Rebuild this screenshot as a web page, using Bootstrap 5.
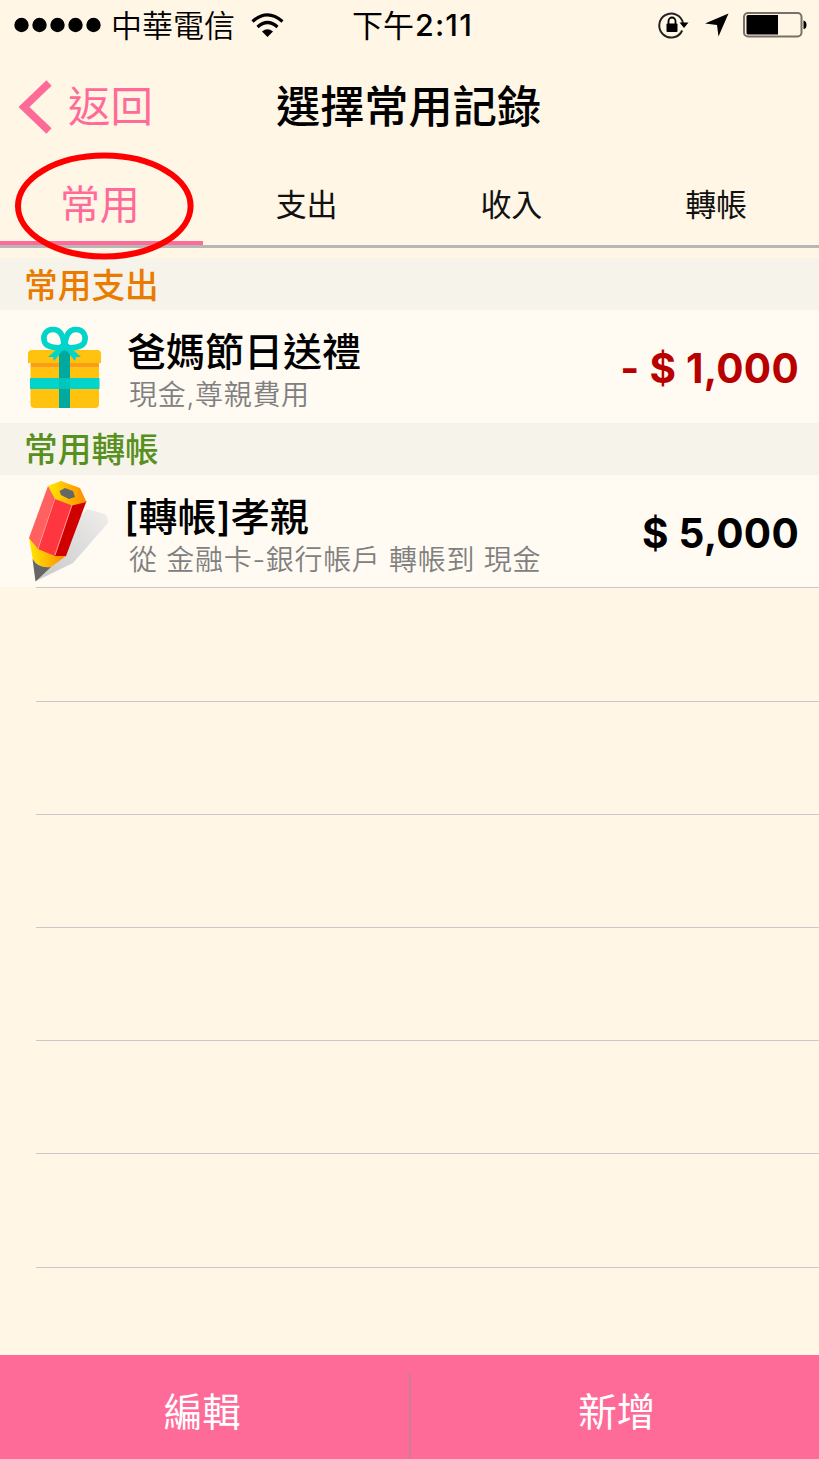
<!DOCTYPE html>
<html lang="zh-Hant">
<head>
<meta charset="utf-8">
<meta name="viewport" content="width=device-width, initial-scale=1">
<title>選擇常用記錄</title>
<link href="https://cdn.jsdelivr.net/npm/bootstrap@5.3.0/dist/css/bootstrap.min.css" rel="stylesheet">
<style>
  body { background: #fff6e6; color: #000; font-family: Inter, "Noto Sans CJK TC", sans-serif; line-height: 1; }
  .app { height: 1459px; }
  .status { height: 50px; padding: 0 13px 0 14px; font-size: 31px; }
  .status svg, .topbar svg, .entry svg { display: block; flex: none; }
  .side { flex: 1 1 0; }
  .carrier { font-weight: 350; margin-left: 9px; }
  .clock { font-size: 31px; margin-left: 4px; }
  .digits { font-size: 30.500px; font-weight: 500; letter-spacing: 1.200px; margin-left: 1px; }
  .indicators { margin-right: -1px; }
  .topbar { height: 112px; padding-top: 3px; }
  .back { color: #ff6b98; font-size: 42.500px; padding-left: 19px; text-decoration: none; gap: 16px; }
  .back svg { margin-top: -2px; }
  .screen-title { font-size: 44.200px; font-weight: 500; margin: 0 0 0 -21px; line-height: 1; }
  .tabs { height: 86px; border-bottom: 3px solid #b6b7b7; margin-bottom: 10px; }
  .tabs .nav-link { color: #111; font-size: 31px; padding: 2px 1px 0 0; line-height: 1; height: 83px; }
  .tabs .nav-link.active { color: #ff6b98; font-size: 40px; padding-right: 5px; }
  .tabs .marker { left: 0; bottom: 0; width: 203px; height: 4px; background: #ff6b98; }
  .ring { left: 14px; top: 152px; }
  .section-head { height: 52px; background: #f6f3ea; font-size: 33.700px; font-weight: 500; padding: 3px 0 0 24px; }
  .spend { color: #e97b00; }
  .transfer { color: #58901f; }
  .entry { height: 112.700px; background: #fffaf2; padding-right: 20px; }
  .icon-slot { width: 127px; height: 112px; }
  .entry-text { padding-top: 8px; }
  .entry-title { font-size: 39px; font-weight: 500; }
  .bracketed { margin-left: -3px; }
  .entry-note { font-size: 28px; letter-spacing: .7px; color: #808080; font-weight: 350; margin: 10px 0 0 2px; }
  .amount { font-size: 40.500px; font-weight: 650; letter-spacing: .25px; white-space: pre; padding-top: 6px; }
  .debit { color: #b80000; }
  .blank { height: 113.200px; margin-left: 36px; border-top: 1.500px solid #cbc9c7; }
  .actions { height: 104px; background: #ff6b98; }
  .actions .btn { border: 0; border-radius: 0; color: #fff; font-size: 38.500px; font-weight: 400; line-height: 1; padding: 10px 4px 0 0; }
  .actions .btn:last-child { padding: 10px 0 0 4px; }
  .split { width: 2px; height: 86px; background: #c97f97; }
</style>
</head>
<body>
<div class="app d-flex flex-column position-relative overflow-hidden">
  <div class="status d-flex align-items-center flex-shrink-0">
    <div class="side d-flex align-items-center">
      <svg width="88" height="16"><g><circle cx="7.5" cy="8" r="7.2"/><circle cx="25.5" cy="8" r="7.2"/><circle cx="43.5" cy="8" r="7.2"/><circle cx="61.5" cy="8" r="7.2"/><circle cx="79.5" cy="8" r="7.2"/></g></svg>
      <span class="carrier">中華電信</span>
      <svg class="ms-3" width="33" height="24" viewBox="0 0 32 24"><g fill="none" stroke="#000" stroke-width="3.2"><path d="M1 8.500Q16-4.700 31 8.500"/><path d="M6 14Q16 5 26 14"/></g><path d="M10.500 18.500Q16 14 21.500 18.500L16 24Z"/></svg>
    </div>
    <div class="clock d-flex align-items-center"><span>下午</span><span class="digits">2:11</span></div>
    <div class="side indicators d-flex align-items-center justify-content-end">
      <svg width="31" height="28" viewBox="0 0 31 28"><path d="M24.200 19.500A12 12 0 1 1 25 12" fill="none" stroke="#222" stroke-width="2"/><path d="M21.500 11.500H30.500L26 17Z"/><rect x="8.500" y="12.500" width="11" height="8.500" rx="1"/><path d="M10.500 13V10a3.500 3.500 0 0 1 7 0V13" fill="none" stroke="#000" stroke-width="1.800"/></svg>
      <svg style="margin-left:16px" width="24" height="24" viewBox="0 0 24 24"><path d="M23.500 0.500L13.500 23.500L12 12L0 10.500Z"/></svg>
      <svg style="margin-left:14px" width="64" height="26" viewBox="0 0 64 26"><rect x="1" y="1" width="57.500" height="23.500" rx="4" fill="none" stroke="#777167" stroke-width="2"/><path d="M5 3H35V22.500H5Q3.500 22.500 3.500 21V4.500Q3.500 3 5 3Z"/><path d="M60.500 8.500Q63.500 9 63.500 13T60.500 17Z"/></svg>
    </div>
  </div>

  <header class="topbar d-flex align-items-center flex-shrink-0">
    <a href="#" class="back side d-flex align-items-center">
      <svg width="33" height="54" viewBox="0 0 33 54"><path d="M30 3L5 27L30 51" fill="none" stroke="#ff6b98" stroke-width="7.500"/></svg>
      <span>返回</span>
    </a>
    <h1 class="screen-title">選擇常用記錄</h1>
    <div class="side"></div>
  </header>

  <nav class="tabs nav row g-0 position-relative flex-shrink-0">
    <a href="#" class="nav-link active col-3 d-flex align-items-center justify-content-center">常用</a>
    <a href="#" class="nav-link col-3 d-flex align-items-center justify-content-center">支出</a>
    <a href="#" class="nav-link col-3 d-flex align-items-center justify-content-center">收入</a>
    <a href="#" class="nav-link col-3 d-flex align-items-center justify-content-center">轉帳</a>
    <span class="marker position-absolute"></span>
  </nav>
  <svg class="ring position-absolute" width="180" height="108"><ellipse cx="90.300" cy="54" rx="86.300" ry="50.500" fill="none" stroke="#f00" stroke-width="6"/></svg>

  <main class="flex-grow-1 overflow-hidden">
    <div class="section-head spend d-flex align-items-center">常用支出</div>
    <div class="entry d-flex align-items-center">
      <svg class="icon-slot" viewBox="0 310 127 112">
        <rect x="30.500" y="360" width="68.500" height="48" rx="4" fill="#fec20f"/>
        <path d="M31 362H99V367H31Z" fill="#fc9c1c"/>
        <path d="M32 350H97Q101 350 101 354V363H28V354Q28 350 32 350Z" fill="#fec20f"/>
        <path d="M59 350H70V408H59Z" fill="#00a99d"/>
        <path d="M30 378H99.500V389H30Z" fill="#00d4cb"/>
        <path d="M59 378H70V389H59Z" fill="#00c5bb"/>
        <g fill="none" stroke="#00d4cb" stroke-width="5.500"><path d="M64 348C64 337 61 329.500 53 329.500C45 329.500 42 337 45 343C48 348 57 348 64 348"/><path d="M65 348C65 337 68 329.500 76 329.500C84 329.500 87 337 84 343C81 348 72 348 65 348"/></g>
        <path d="M60 344H69L72 349L81 357L76 357L75 361L66 350H63L54 361L53 357L48 357L57 349Z" fill="#00d4cb"/>
      </svg>
      <div class="entry-text flex-grow-1">
        <div class="entry-title">爸媽節日送禮</div>
        <div class="entry-note">現金,尊親費用</div>
      </div>
      <div class="amount debit">- $ 1,000</div>
    </div>
    <div class="section-head transfer d-flex align-items-center">常用轉帳</div>
    <div class="entry d-flex align-items-center">
      <svg class="icon-slot" viewBox="0 475 127 112">
        <defs>
          <linearGradient id="shade" x1="0" y1="1" x2="1" y2="0"><stop offset="0" stop-color="#c8c8c8"/><stop offset="1" stop-color="#efeeec"/></linearGradient>
          <linearGradient id="gold"><stop offset="0" stop-color="#ffe800"/><stop offset="1" stop-color="#ff8a00"/></linearGradient>
        </defs>
        <path d="M36 581L60 540L87 509L105 514Q108 517 108 523L73 563Z" fill="url(#shade)"/>
        <path d="M29 538L33 560Q41 569 51 567L66 556L58 542Z" fill="url(#gold)"/>
        <path d="M32.500 559Q39 569 51 567L35.500 581.500Z" fill="#666"/>
        <path d="M48 486L29 538L38 549L56 496Z" fill="#ff6060"/>
        <path d="M55 495L38 549L55 556L72 504Z" fill="#ff3540"/>
        <path d="M72 504L86.500 501L66 556L55 556Z" fill="#d00000"/>
        <path d="M55 498L38 549M72 505L55 555" stroke="#ff9898" stroke-width="1" fill="none"/>
        <path d="M48 486L61 481L80 488L86.500 502L72 505.500L55 499Z" fill="url(#gold)"/>
        <path d="M59.500 491L65 488L73 491L75 497L69 499L61 495Z" fill="#666"/>
      </svg>
      <div class="entry-text flex-grow-1">
        <div class="entry-title bracketed">[轉帳]孝親</div>
        <div class="entry-note">從 金融卡-銀行帳戶 轉帳到 現金</div>
      </div>
      <div class="amount">$ 5,000</div>
    </div>
    <div class="blank"></div>
    <div class="blank"></div>
    <div class="blank"></div>
    <div class="blank"></div>
    <div class="blank"></div>
    <div class="blank"></div>
    <div class="blank"></div>
  </main>

  <footer class="actions d-flex align-items-end flex-shrink-0">
    <button class="btn flex-fill h-100 w-50">編輯</button>
    <span class="split flex-shrink-0"></span>
    <button class="btn flex-fill h-100 w-50">新增</button>
  </footer>
</div>
<script src="https://cdn.jsdelivr.net/npm/bootstrap@5.3.0/dist/js/bootstrap.bundle.min.js"></script>
</body>
</html>
